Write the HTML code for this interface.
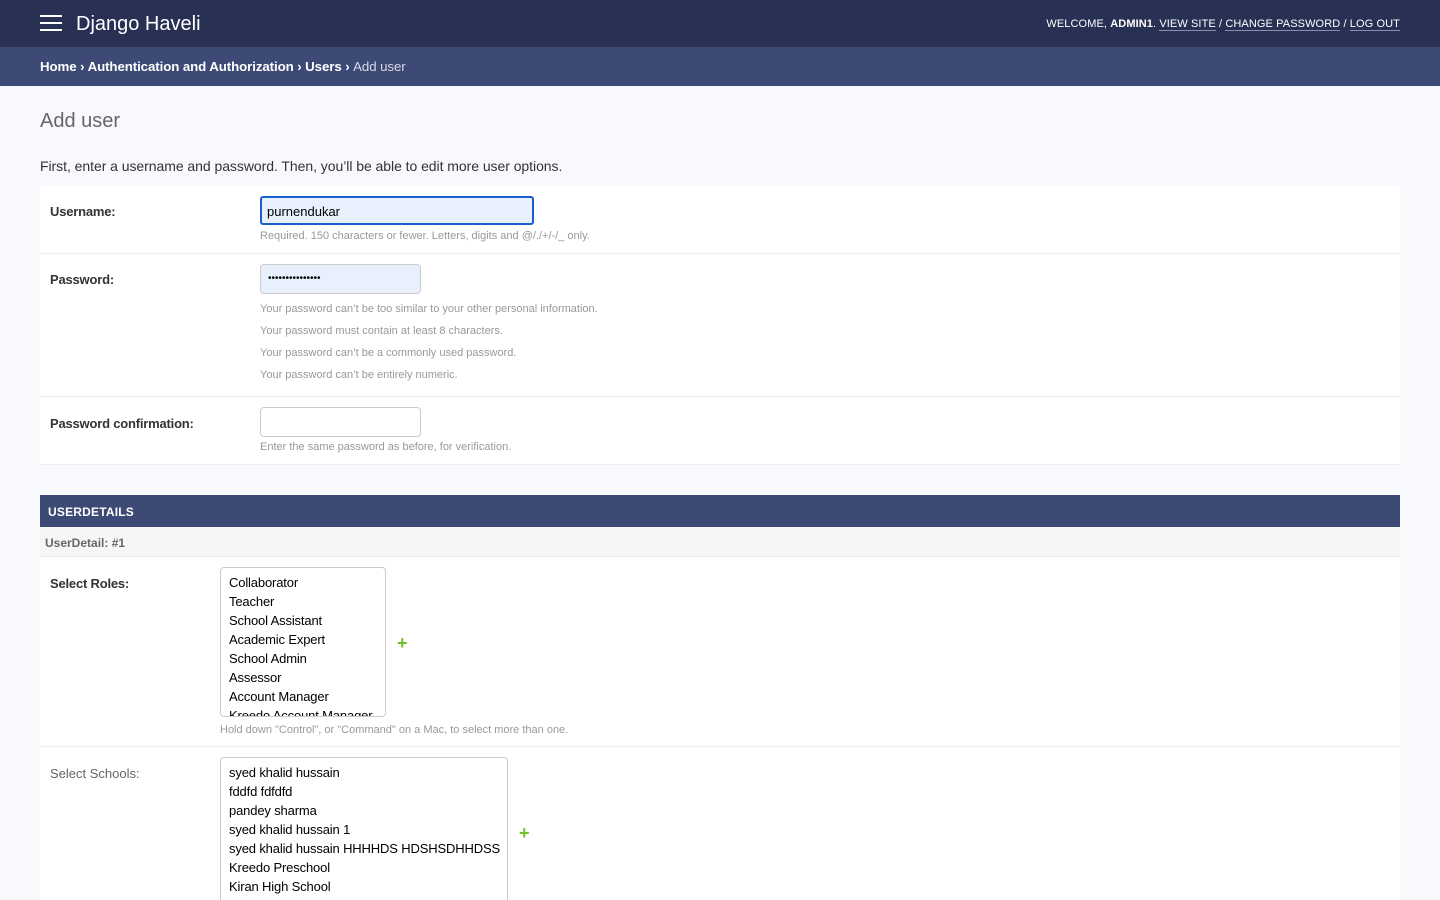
<!DOCTYPE html>
<html style="overflow:hidden;width:1440px;height:900px"><head><meta charset="utf-8"><style>
*{box-sizing:border-box;margin:0;padding:0}
body{width:1440px;height:900px;overflow:hidden;background:#f8f9fc;font-family:"Liberation Sans",Arial,sans-serif;color:#333;position:relative}
.a{position:absolute}
#hdr{left:0;top:0;width:1440px;height:47px;background:#283154}
#bc{left:0;top:47px;width:1440px;height:39px;background:#3d4a76;color:#fff;font-size:13.3px;font-weight:bold;padding:12px 40px;white-space:nowrap;letter-spacing:-0.1px}
#bc span{font-weight:normal;color:#d6dae6}
.row{left:40px;width:1360px;background:#fff;border-bottom:1px solid #eee}
.lbl{font-size:13px;font-weight:bold;color:#333;letter-spacing:-0.2px}
.help{font-size:11px;color:#999;white-space:nowrap}
.inp{border:1px solid #ccc;border-radius:4px;background:#fff}
.sel{border:1px solid #ccc;border-radius:4px;background:#fff;overflow:hidden;font-size:13px;color:#000;padding:5px 8px;line-height:19px;white-space:nowrap;letter-spacing:-0.15px}
.plus{color:#70bf2b;font-weight:bold;font-size:18px}
</style></head><body>
<div id="hdr" class="a">
 <div class="a" style="left:40px;top:15px;width:22px;height:2px;background:#fff"></div>
 <div class="a" style="left:40px;top:22px;width:22px;height:2px;background:#fff"></div>
 <div class="a" style="left:40px;top:29px;width:22px;height:2px;background:#fff"></div>
 <div class="a" style="left:76px;top:13px;font-size:20px;color:#fff">Django Haveli</div>
 <div class="a" style="right:40px;top:18px;font-size:11px;color:#fff;letter-spacing:.1px;white-space:nowrap">WELCOME, <b>ADMIN1</b>. <span style="border-bottom:1px solid #8890aa">VIEW SITE</span> / <span style="border-bottom:1px solid #8890aa">CHANGE PASSWORD</span> / <span style="border-bottom:1px solid #8890aa">LOG OUT</span></div>
</div>
<div id="bc" class="a">Home › Authentication and Authorization › Users › <span>Add user</span></div>
<div class="a" style="left:40px;top:110px;font-size:20px;font-weight:300;color:#666">Add user</div>
<div class="a" style="left:40px;top:158px;font-size:14px;color:#333;letter-spacing:-0.05px">First, enter a username and password. Then, you’ll be able to edit more user options.</div>

<div class="a row" style="top:186px;height:68px">
 <div class="a lbl" style="left:10px;top:18px">Username:</div>
 <div class="a" style="left:220px;top:10px;width:274px;height:29px;border:2px solid #1a5fd0;border-radius:3px;background:#e8f0fe;font-size:13px;color:#000;padding:6px 5px">purnendukar</div>
 <div class="a help" style="left:220px;top:44px">Required. 150 characters or fewer. Letters, digits and @/./+/-/_ only.</div>
</div>
<div class="a row" style="top:254px;height:143px">
 <div class="a lbl" style="left:10px;top:18px">Password:</div>
 <div class="a inp" style="left:220px;top:10px;width:161px;height:30px;background:#e8f0fe;font-size:10px;padding:8px 7px;color:#000">•••••••••••••••</div>
 <div class="a help" style="left:220px;top:49px">Your password can’t be too similar to your other personal information.</div>
 <div class="a help" style="left:220px;top:71px">Your password must contain at least 8 characters.</div>
 <div class="a help" style="left:220px;top:93px">Your password can’t be a commonly used password.</div>
 <div class="a help" style="left:220px;top:115px">Your password can’t be entirely numeric.</div>
</div>
<div class="a row" style="top:397px;height:68px">
 <div class="a lbl" style="left:10px;top:19px">Password confirmation:</div>
 <div class="a inp" style="left:220px;top:10px;width:161px;height:30px"></div>
 <div class="a help" style="left:220px;top:44px">Enter the same password as before, for verification.</div>
</div>

<div class="a" style="left:40px;top:495px;width:1360px;height:32px;background:#3d4a76;color:#fff;font-size:12px;font-weight:bold;padding:10px 8px;letter-spacing:.2px">USERDETAILS</div>
<div class="a" style="left:40px;top:527px;width:1360px;height:30px;background:#f6f6f6;border-bottom:1px solid #eee;color:#666;font-size:12px;font-weight:bold;padding:9px 5px">UserDetail: #1</div>
<div class="a row" style="top:557px;height:190px">
 <div class="a lbl" style="left:10px;top:19px">Select Roles:</div>
 <div class="a sel" style="left:180px;top:10px;width:166px;height:150px">Collaborator<br>Teacher<br>School Assistant<br>Academic Expert<br>School Admin<br>Assessor<br>Account Manager<br>Kreedo Account Manager</div>
 <div class="a plus" style="left:357px;top:76px">+</div>
 <div class="a help" style="left:180px;top:167px">Hold down "Control", or "Command" on a Mac, to select more than one.</div>
</div>
<div class="a row" style="top:747px;height:153px;border-bottom:none">
 <div class="a" style="left:10px;top:19px;font-size:13px;color:#666">Select Schools:</div>
 <div class="a sel" style="left:180px;top:10px;width:288px;height:160px">syed khalid hussain<br>fddfd fdfdfd<br>pandey sharma<br>syed khalid hussain 1<br>syed khalid hussain HHHHDS HDSHSDHHDSS<br>Kreedo Preschool<br>Kiran High School<br>Sample School</div>
 <div class="a plus" style="left:479px;top:76px">+</div>
</div>
</body></html>
